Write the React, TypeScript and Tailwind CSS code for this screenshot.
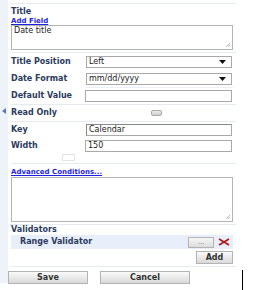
import React from "react"

const label = "text-[8px] font-bold text-[#2c3b5e] leading-[10px]"
const field = "h-[12px] border border-[#a9a9a9] bg-white text-[8px] leading-[10px] text-[#222] px-[2px] flex items-center"

const Sep = () => <div className="h-px bg-[#e6ebf3] mr-[-3px]" />

const Select = ({ value }: { value: string }) => (
  <div className={field + " w-[146px] justify-between"}>
    <span>{value}</span>
    <svg width="7" height="4" viewBox="0 0 7 4" className="mr-[3px]">
      <path d="M0 0h7L3.5 4z" fill="#111" />
    </svg>
  </div>
)

const Row = ({ name, children, h = 17 }: { name: string; children?: React.ReactNode; h?: number }) => (
  <div className="flex items-center" style={{ height: h }}>
    <div className={label + " w-[75px] shrink-0"}>{name}</div>
    {children}
  </div>
)

const Grip = () => (
  <svg width="6" height="6" viewBox="0 0 6 6" className="absolute right-[1px] bottom-[1px]">
    <path d="M5 1L1 5M5 3L3 5" stroke="#aaa" strokeWidth="0.8" />
  </svg>
)

const btn = "shrink-0 h-[13px] border border-[#b3b3b3] bg-gradient-to-b from-[#fafafa] to-[#d9d9d9] text-[8px] font-bold text-[#333] leading-[11px] flex items-center justify-center"

export default function App() {
  return (
    <div className="w-[255px] h-[290px] bg-white flex" style={{ fontFamily: '"DejaVu Sans", Verdana, sans-serif' }}>
      <div className="w-[8px] h-[283px] bg-[#eef2f9] shrink-0 relative">
        <svg width="4" height="6" viewBox="0 0 4 6" className="absolute left-[2px] top-[108px]">
          <path d="M4 0v6L0 3z" fill="#5b78b6" />
        </svg>
      </div>
      <div className="w-[225px] flex flex-col">
        <div className="pl-[2px] pt-[3px] flex flex-col">
          <Sep />
          <div className={label + " pl-[1px] mt-[3px]"}>Title</div>
          <div className="pl-[1px] text-[7px] font-bold text-[#1f1fe0] underline leading-[8px]">Add Field</div>
          <div className="relative ml-[1px] h-[25px] border border-[#b4b4b4] text-[8px] text-[#222] px-[2px] leading-[10px]">
            Date title
            <Grip />
          </div>
          <div className="mt-[2px]"><Sep /></div>
          <div className="pl-[1px] flex flex-col">
            <Row name="Title Position"><Select value="Left" /></Row>
            <Row name="Date Format"><Select value="mm/dd/yyyy" /></Row>
            <div className="h-px bg-[#eaf0f8] ml-[75px]" />
            <Row name="Default Value" h={16}>
              <div className={field + " w-[147px] -ml-[1px]"} />
            </Row>
            <Sep />
            <Row name="Read Only" h={16}>
              <div className="ml-[65px] w-[11px] h-[6px] rounded-[2px] border border-[#a8a8a8] bg-gradient-to-b from-[#eeeeee] to-[#cccccc]" />
            </Row>
            <Sep />
            <Row name="Key" h={16}>
              <div className={field + " w-[146px] border-t-[#8a8a8a] border-l-[#8a8a8a]"}>Calendar</div>
            </Row>
            <Row name="Width" h={16}>
              <div className={field + " w-[147px] -ml-[1px]"}>150</div>
            </Row>
            <div className="h-[9px]">
              <div className="ml-[51px] w-[13px] h-[7px] border border-[#e4e4e4]" />
            </div>
            <Sep />
          </div>
          <div className="pl-[1px] mt-[4px] text-[7px] font-bold text-[#1f1fe0] underline leading-[9px]">Advanced Conditions...</div>
          <div className="relative ml-[1px] h-[45px] border border-[#b4b4b4]">
            <Grip />
          </div>
          <div className="mt-[2px]"><Sep /></div>
          <div className={label + " pl-[1px] leading-[9px]"}>Validators</div>
          <div className="ml-[1px] h-[14px] bg-[#e8effa] flex items-center justify-between">
            <span className="pl-[9px] text-[8px] font-bold text-[#2c3b5e] leading-[10px]">Range Validator</span>
            <div className="flex items-center gap-[4px] pr-[3px]">
              <div className="w-[26px] h-[11px] border border-[#b3b3b3] bg-gradient-to-b from-[#f8f8f8] to-[#dcdcdc] text-[7px] text-[#777] leading-[8px] flex justify-center">...</div>
              <svg width="12" height="8" viewBox="0 0 12 8">
                <path d="M1 1L11 7M11 1L1 7" stroke="#b01818" strokeWidth="1.6" />
              </svg>
            </div>
          </div>
          <div className="flex justify-end mt-[2px]">
            <div className={btn + " w-[37px] border-[#7c98c6]"}>Add</div>
          </div>
          <div className="mt-[2px]"><Sep /></div>
        </div>
        <div className="flex items-start mt-[4px] gap-[12px]">
          <div className={btn + " w-[80px]"}>Save</div>
          <div className={btn + " w-[90px]"}>Cancel</div>
          <div className="shrink-0 w-px h-[20px] bg-black ml-[40px] -mt-[1px]" />
        </div>
      </div>
    </div>
  )
}
